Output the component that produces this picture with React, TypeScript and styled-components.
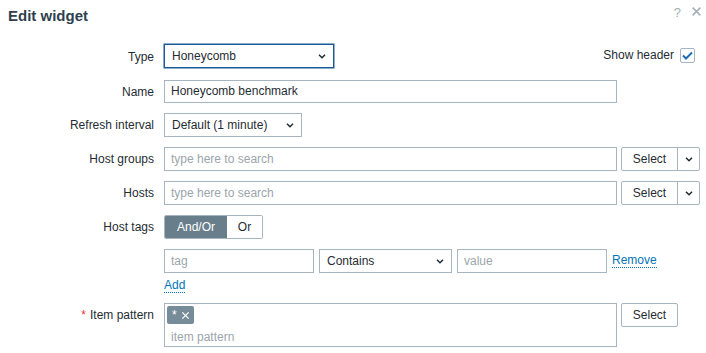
import React from 'react';
import styled, { createGlobalStyle } from 'styled-components';

const GlobalStyle = createGlobalStyle`
  body {
    margin: 0;
    background: #ffffff;
    font-family: "Liberation Sans", Arial, sans-serif;
    font-size: 12px;
    color: #1f2c33;
  }
`;

const BORDER = '#a6b5bf';

const Dialog = styled.div`
  width: 706px;
  height: 353px;
  overflow: hidden;
  background: #ffffff;
`;

const Header = styled.div`
  display: flex;
  justify-content: space-between;
  align-items: flex-start;
  padding: 6px 4px 0 8px;
  height: 38px;
  box-sizing: border-box;
`;

const Title = styled.h4`
  margin: 0;
  font-size: 15px;
  line-height: 19px;
  font-weight: bold;
  color: #2e3f4f;
`;

const HeaderIcons = styled.div`
  display: flex;
  gap: 10px;
  color: #a3aeb6;
  font-size: 13px;
  line-height: 13px;
`;

const Form = styled.div`
  display: grid;
  grid-template-columns: 146px 1fr;
  column-gap: 10px;
  row-gap: 10px;
  padding: 6px 7px 0 8px;
`;

const Label = styled.div<{ $top?: boolean }>`
  text-align: right;
  line-height: 14px;
  align-self: ${({ $top }) => ($top ? 'start' : 'center')};
  margin-top: ${({ $top }) => ($top ? 5 : 0)}px;
  white-space: nowrap;
`;

const Asterisk = styled.span`
  color: #e33734;
  margin-right: 4px;
`;

const Field = styled.div<{ $height?: number }>`
  display: flex;
  align-items: flex-start;
  gap: 4px;
  min-height: ${({ $height }) => $height ?? 24}px;
`;

const Spacer = styled.div`
  flex: 1;
`;

const SelectBox = styled.div<{ $width: number; $focused?: boolean }>`
  box-sizing: border-box;
  width: ${({ $width }) => $width}px;
  height: 24px;
  display: flex;
  align-items: center;
  justify-content: space-between;
  padding: 0 6px 0 7px;
  border: 1px solid ${({ $focused }) => ($focused ? '#1c5a93' : BORDER)};
  background: #ffffff;
  ${({ $focused }) => $focused && 'box-shadow: 0 0 0 0.5px #1c5a93;'}
`;

const TextInput = styled.div<{ $width: number; $height?: number; $placeholder?: boolean }>`
  box-sizing: border-box;
  width: ${({ $width }) => $width}px;
  height: ${({ $height }) => $height ?? 24}px;
  line-height: ${({ $height }) => ($height ?? 24) - 2}px;
  padding: 0 6px;
  border: 1px solid ${BORDER};
  background: #ffffff;
  color: ${({ $placeholder }) => ($placeholder ? '#9ba5ac' : '#1f2c33')};
  white-space: nowrap;
  overflow: hidden;
`;

const Button = styled.div<{ $width: number }>`
  box-sizing: border-box;
  width: ${({ $width }) => $width}px;
  height: 24px;
  line-height: 22px;
  text-align: center;
  border: 1px solid ${BORDER};
  border-radius: 2px;
  background: #ffffff;
`;

const ButtonGroup = styled.div`
  display: flex;
  box-sizing: border-box;
  height: 24px;
  border: 1px solid ${BORDER};
  border-radius: 2px;
  background: #ffffff;
`;

const GroupPart = styled.div<{ $width: number; $divider?: boolean }>`
  width: ${({ $width }) => $width}px;
  display: flex;
  align-items: center;
  justify-content: center;
  ${({ $divider }) => $divider && `border-left: 1px solid ${BORDER};`}
`;

const Radio = styled.div`
  display: flex;
  box-sizing: border-box;
  height: 24px;
  border: 1px solid ${BORDER};
  border-radius: 2px;
  overflow: hidden;
`;

const RadioOption = styled.div<{ $active?: boolean; $width: number }>`
  width: ${({ $width }) => $width}px;
  text-align: center;
  line-height: 22px;
  background: ${({ $active }) => ($active ? '#697e8b' : '#ffffff')};
  color: ${({ $active }) => ($active ? '#ffffff' : '#1f2c33')};
`;

const Link = styled.span`
  color: #0275b8;
  border-bottom: 1px dotted #0275b8;
  line-height: 13px;
`;

const TagTable = styled.div`
  display: flex;
  flex-direction: column;
  gap: 6px;
`;

const TagRow = styled.div`
  display: flex;
  align-items: center;
  gap: 5px;
`;

const ShowHeader = styled.label`
  display: flex;
  align-items: center;
  gap: 6px;
  height: 24px;
  margin: -1px 5px 0 0;
`;

const Checkbox = styled.div`
  box-sizing: border-box;
  width: 15px;
  height: 15px;
  border: 1px solid ${BORDER};
  border-radius: 2px;
  display: flex;
  align-items: center;
  justify-content: center;
`;

const MultiSelect = styled.div`
  box-sizing: border-box;
  width: 453px;
  height: 44px;
  border: 1px solid ${BORDER};
  padding: 2px 2px 0 2px;
  display: flex;
  flex-direction: column;
  gap: 6px;
`;

const Chip = styled.span`
  align-self: flex-start;
  display: inline-flex;
  align-items: center;
  gap: 4px;
  height: 18px;
  padding: 0 4px 0 5px;
  border-radius: 2px;
  background: #768d99;
  color: #ffffff;
  font-size: 12px;
`;

const Placeholder = styled.span`
  color: #9ba5ac;
  padding-left: 4px;
  line-height: 14px;
`;

const Chevron = () => (
  <svg width="10" height="7" viewBox="0 0 10 7">
    <polyline points="2,1.8 5,4.8 8,1.8" fill="none" stroke="#1f2c33" strokeWidth="1.5" />
  </svg>
);

const Cross = ({ size, color }: { size: number; color: string }) => (
  <svg width={size} height={size} viewBox="0 0 10 10">
    <path d="M1.5 1.5 L8.5 8.5 M8.5 1.5 L1.5 8.5" stroke={color} strokeWidth="1.4" />
  </svg>
);

const SelectWithMenu = () => (
  <ButtonGroup>
    <GroupPart $width={55}>Select</GroupPart>
    <GroupPart $width={21} $divider>
      <Chevron />
    </GroupPart>
  </ButtonGroup>
);

export default function App() {
  return (
    <Dialog>
      <GlobalStyle />
      <Header>
        <Title>Edit widget</Title>
        <HeaderIcons>
          <span>?</span>
          <Cross size={11} color="#a3aeb6" />
        </HeaderIcons>
      </Header>
      <Form>
        <Label>Type</Label>
        <Field $height={26}>
          <SelectBox $width={170} $focused>
            <span>Honeycomb</span>
            <Chevron />
          </SelectBox>
          <Spacer />
          <ShowHeader>
            Show header
            <Checkbox>
              <svg width="11" height="9" viewBox="0 0 11 9">
                <polyline points="1,4.5 4,7.5 10,1.5" fill="none" stroke="#1e6db5" strokeWidth="2" />
              </svg>
            </Checkbox>
          </ShowHeader>
        </Field>

        <Label>Name</Label>
        <Field $height={23}>
          <TextInput $width={453} $height={23}>Honeycomb benchmark</TextInput>
        </Field>

        <Label>Refresh interval</Label>
        <Field>
          <SelectBox $width={138}>
            <span>Default (1 minute)</span>
            <Chevron />
          </SelectBox>
        </Field>

        <Label>Host groups</Label>
        <Field>
          <TextInput $width={453} $placeholder>type here to search</TextInput>
          <SelectWithMenu />
        </Field>

        <Label>Hosts</Label>
        <Field>
          <TextInput $width={453} $placeholder>type here to search</TextInput>
          <SelectWithMenu />
        </Field>

        <Label>Host tags</Label>
        <Field>
          <Radio>
            <RadioOption $active $width={62}>And/Or</RadioOption>
            <RadioOption $width={35}>Or</RadioOption>
          </Radio>
        </Field>

        <div />
        <TagTable>
          <TagRow>
            <TextInput $width={150} $placeholder>tag</TextInput>
            <SelectBox $width={133}>
              <span>Contains</span>
              <Chevron />
            </SelectBox>
            <TextInput $width={150} $placeholder>value</TextInput>
            <Link>Remove</Link>
          </TagRow>
          <TagRow>
            <Link>Add</Link>
          </TagRow>
        </TagTable>

        <Label $top>
          <Asterisk>*</Asterisk>Item pattern
        </Label>
        <Field>
          <MultiSelect>
            <Chip>
              *
              <Cross size={9} color="#ffffff" />
            </Chip>
            <Placeholder>item pattern</Placeholder>
          </MultiSelect>
          <Button $width={57}>Select</Button>
        </Field>
      </Form>
    </Dialog>
  );
}
